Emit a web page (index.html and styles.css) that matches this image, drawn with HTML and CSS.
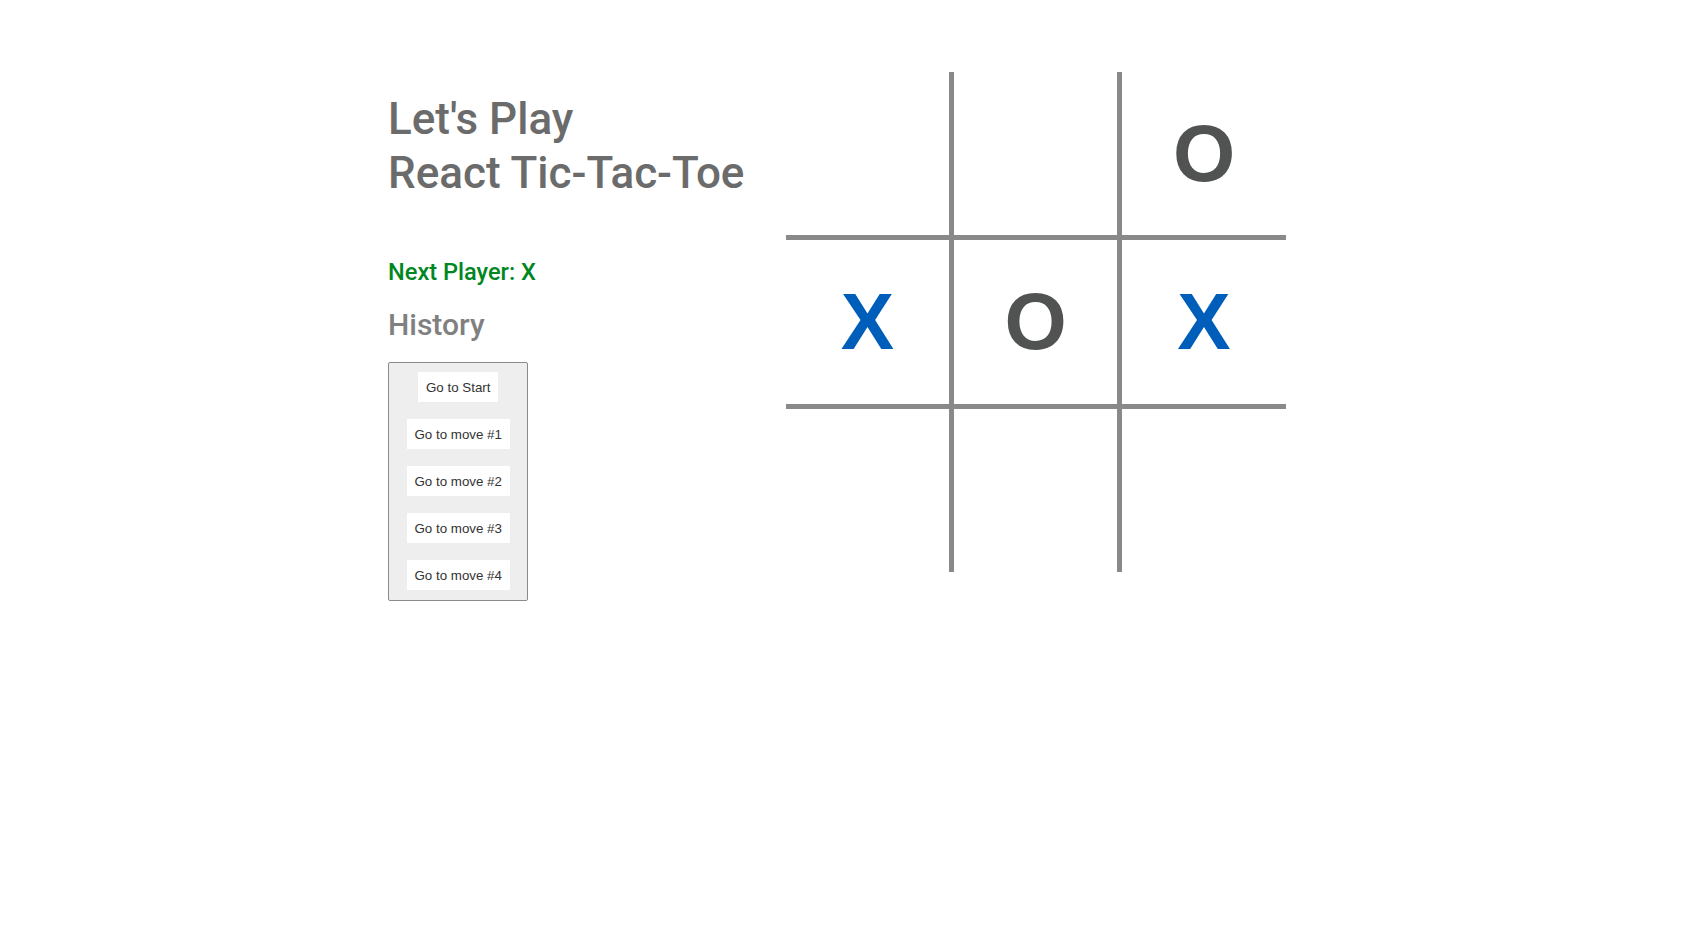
FILE: index.html
```html
<!DOCTYPE html>
<html lang="en">
<head>
<meta charset="utf-8">
<title>React Tic-Tac-Toe</title>
<link rel="stylesheet" href="styles.css">
</head>
<body>
<div class="app">
  <div class="side">
    <h1 class="title">Let's Play<br>React Tic-Tac-Toe</h1>
    <div class="status">Next Player: X</div>
    <h2 class="history-title">History</h2>
    <ol class="history">
      <li><button class="move">Go to Start</button></li>
      <li><button class="move">Go to move #1</button></li>
      <li><button class="move">Go to move #2</button></li>
      <li><button class="move">Go to move #3</button></li>
      <li><button class="move">Go to move #4</button></li>
    </ol>
  </div>
  <div class="board">
    <div class="cell c1"></div>
    <div class="cell c2"></div>
    <div class="cell c3 o">O</div>
    <div class="cell c1 x">X</div>
    <div class="cell c2 o">O</div>
    <div class="cell c3 x">X</div>
    <div class="cell c1 last"></div>
    <div class="cell c2 last"></div>
    <div class="cell c3 last"></div>
  </div>
</div>
</body>
</html>
```

FILE: styles.css
```css
html, body {
  margin: 0;
  padding: 0;
  background: #fff;
}

body {
  font-family: Roboto, "Liberation Sans", sans-serif;
}

.app {
  display: flex;
  align-items: flex-start;
  padding: 72px 0 0 388px;
  gap: 40px;
}

.side {
  width: 358px;
  display: flex;
  flex-direction: column;
  align-items: flex-start;
}

.title {
  margin: 20px 0 0;
  font-size: 44px;
  line-height: 54px;
  font-weight: 500;
  color: #6b6b6b;
}

.status {
  margin-top: 58px;
  font-size: 23.6px;
  font-weight: 500;
  color: #00871f;
}

.history-title {
  margin: 21px 0 0;
  font-size: 30px;
  font-weight: 500;
  color: #808080;
}

.history {
  margin: 20px 0 0;
  list-style: none;
  padding: 9px 17.5px 10px;
  background: #eeeeee;
  border: 1px solid #8a8a8a;
  border-radius: 2px;
  display: flex;
  flex-direction: column;
  align-items: center;
  gap: 17px;
}

.move {
  font-family: "Liberation Sans", Arial, sans-serif;
  font-size: 13.333px;
  color: #333;
  background: #fff;
  border: none;
  height: 30px;
  padding: 0 8px;
  margin: 0;
}

.board {
  display: grid;
  grid-template-columns: 168px 168px 164px;
  grid-template-rows: 168px 169px 163px;
}

.cell {
  box-sizing: border-box;
  display: flex;
  align-items: center;
  justify-content: center;
  font-family: "Liberation Sans", Arial, sans-serif;
  font-weight: 700;
  font-size: 80px;
  line-height: 1;
  border-bottom: 5px solid #898989;
}

.c1, .c2 {
  border-right: 5px solid #898989;
}

.cell.last {
  border-bottom: none;
}

.x {
  color: #005ebb;
}

.o {
  color: #515352;
}
```
